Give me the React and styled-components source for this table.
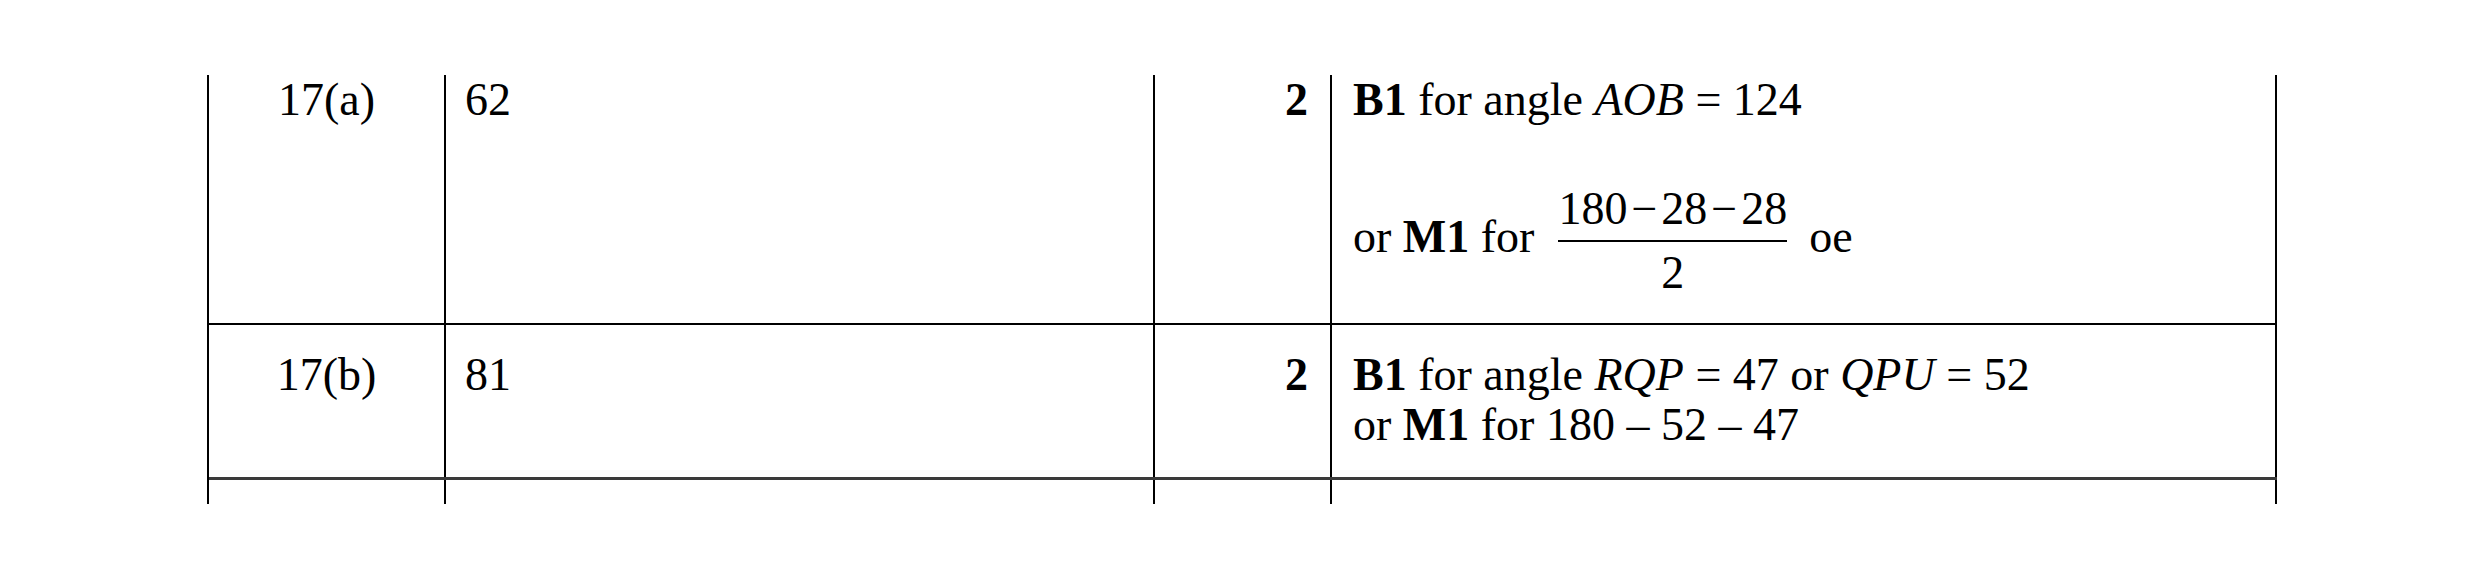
import React from "react";
import styled, { createGlobalStyle } from "styled-components";

const Global = createGlobalStyle`
  html, body { margin: 0; padding: 0; background: #fff; }
  body {
    font-family: "Liberation Serif", "Times New Roman", serif;
    color: #000;
  }
`;

const Page = styled.div`
  width: 2481px;
  height: 580px;
  box-sizing: border-box;
  padding: 75px 0 0 207px;
  overflow: hidden;
  background: #fff;
`;

const Table = styled.div`
  display: flex;
  flex-direction: column;
  width: max-content;
  border-left: 2px solid #000;
`;

const Row = styled.div`
  display: grid;
  grid-template-columns: 237px 709px 177px 945px;
  box-sizing: border-box;
  height: ${(p) => p.$height}px;
  border-bottom: ${(p) => (p.$rule ? `${p.$rule}px solid ${p.$ruleColor}` : "none")};
  font-size: 46px;
  line-height: 50px;
`;

const Cell = styled.div`
  box-sizing: border-box;
  border-right: 2px solid #000;
  padding-top: ${(p) => p.$top || 0}px;
`;

const QuestionCell = styled(Cell)`
  text-align: center;
`;

const AnswerCell = styled(Cell)`
  padding-left: 19px;
`;

const MarkCell = styled(Cell)`
  text-align: right;
  padding-right: 22px;
  font-weight: bold;
`;

const GuidanceCell = styled(Cell)`
  padding-left: 21px;
`;

const Line = styled.div`
  margin-top: ${(p) => p.$gap || 0}px;
  white-space: nowrap;
`;

const Bold = styled.b`
  font-weight: bold;
`;

const Var = styled.i`
  font-style: italic;
`;

const Fraction = styled.span`
  display: inline-flex;
  flex-direction: column;
  align-items: stretch;
  vertical-align: 28px;
  margin: 0 22px 0 24px;
  text-align: center;
`;

const Numerator = styled.span`
  display: block;
  padding-bottom: 6px;
  border-bottom: 2px solid #000;
`;

const Denominator = styled.span`
  display: block;
  padding-top: 6px;
`;

const Minus = styled.span`
  margin: 0 4px;
`;

export default function App() {
  return (
    <>
      <Global />
      <Page lang="en">
        <Table>
          <Row $height={250} $rule={2} $ruleColor="#000">
            <QuestionCell>17(a)</QuestionCell>
            <AnswerCell>62</AnswerCell>
            <MarkCell>2</MarkCell>
            <GuidanceCell>
              <Line>
                <Bold>B1</Bold> for angle <Var>AOB</Var> = 124
              </Line>
              <Line $gap={59}>
                or <Bold>M1</Bold> for
                <Fraction>
                  <Numerator>
                    180<Minus>−</Minus>28<Minus>−</Minus>28
                  </Numerator>
                  <Denominator>2</Denominator>
                </Fraction>
                oe
              </Line>
            </GuidanceCell>
          </Row>
          <Row $height={155} $rule={3} $ruleColor="#3a3a3a">
            <QuestionCell $top={25}>17(b)</QuestionCell>
            <AnswerCell $top={25}>81</AnswerCell>
            <MarkCell $top={25}>2</MarkCell>
            <GuidanceCell $top={25}>
              <Line>
                <Bold>B1</Bold> for angle <Var>RQP</Var> = 47 or <Var>QPU</Var> = 52
              </Line>
              <Line>
                or <Bold>M1</Bold> for 180 – 52 – 47
              </Line>
            </GuidanceCell>
          </Row>
          <Row $height={24}>
            <Cell />
            <Cell />
            <Cell />
            <Cell />
          </Row>
        </Table>
      </Page>
    </>
  );
}
